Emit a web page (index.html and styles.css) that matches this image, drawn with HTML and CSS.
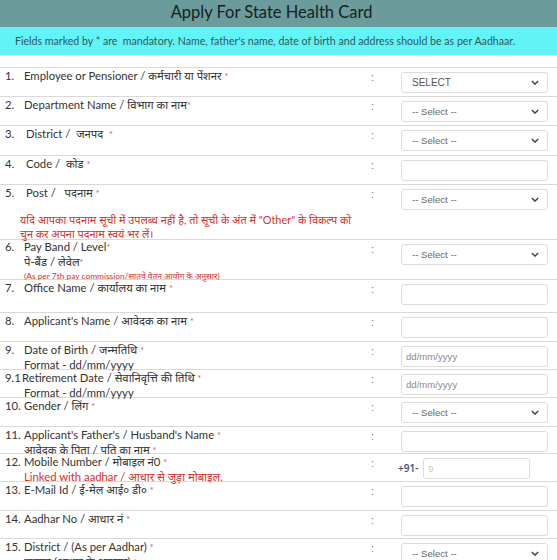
FILE: index.html
```html
<!DOCTYPE html>
<html lang="hi">
<head>
<meta charset="utf-8">
<title>Apply For State Health Card</title>
<link rel="stylesheet" href="styles.css">
</head>
<body>
<div class="title-bar">Apply For State Health Card</div>
<div class="note-bar">Fields marked by * are&nbsp; mandatory. Name, father's name, date of birth and address should be as per Aadhaar.</div>

<div class="form">
  <div class="row r29">
    <div class="label"><span class="num">1.</span><span class="txt">Employee or Pensioner / कर्मचारी या पेंशनर <i class="req">*</i></span></div>
    <div class="colon">:</div>
    <div class="field"><div class="sel"><span class="upper">SELECT</span><svg viewBox="0 0 10 6" class="chev"><path d="M1 1l4 4 4-4" /></svg></div></div>
  </div>
  <div class="row r29">
    <div class="label"><span class="num">2.</span><span class="txt">Department Name / विभाग का नाम<i class="req">*</i></span></div>
    <div class="colon">:</div>
    <div class="field"><div class="sel"><span>-- Select --</span><svg viewBox="0 0 10 6" class="chev"><path d="M1 1l4 4 4-4" /></svg></div></div>
  </div>
  <div class="row r30">
    <div class="label"><span class="num">3.</span><span class="txt sp">District / &nbsp;जनपद &nbsp;<i class="req">*</i></span></div>
    <div class="colon">:</div>
    <div class="field"><div class="sel"><span>-- Select --</span><svg viewBox="0 0 10 6" class="chev"><path d="M1 1l4 4 4-4" /></svg></div></div>
  </div>
  <div class="row r29">
    <div class="label"><span class="num">4.</span><span class="txt sp">Code / &nbsp;कोड <i class="req">*</i></span></div>
    <div class="colon">:</div>
    <div class="field"><div class="inp"></div></div>
  </div>
  <div class="row r55">
    <div class="label">
      <div class="line"><span class="num">5.</span><span class="txt sp">Post / &nbsp;&nbsp;पदनाम <i class="req">*</i></span></div>
      <div class="warn">यदि आपका पदनाम सूची में उपलब्ध नहीं है, तो सूची के अंत में "Other" के विकल्प को<br>चुन कर अपना पदनाम स्वयं भर लें।</div>
    </div>
    <div class="colon">:</div>
    <div class="field"><div class="sel"><span>-- Select --</span><svg viewBox="0 0 10 6" class="chev"><path d="M1 1l4 4 4-4" /></svg></div></div>
  </div>
  <div class="row r40">
    <div class="label tight">
      <div class="line"><span class="num">6.</span><span class="txt">Pay Band / Level<i class="req">*</i></span></div>
      <div class="sub">पे-बैंड / लेवेल<i class="req">*</i></div>
      <div class="sub tiny">(As per 7th pay commission/सातवें वेतन आयोग के अनुसार)</div>
    </div>
    <div class="colon">:</div>
    <div class="field"><div class="sel"><span>-- Select --</span><svg viewBox="0 0 10 6" class="chev"><path d="M1 1l4 4 4-4" /></svg></div></div>
  </div>
  <div class="row r33">
    <div class="label"><span class="num">7.</span><span class="txt">Office Name / कार्यालय का नाम <i class="req">*</i></span></div>
    <div class="colon">:</div>
    <div class="field"><div class="inp"></div></div>
  </div>
  <div class="row r29">
    <div class="label"><span class="num">8.</span><span class="txt">Applicant's Name / आवेदक का नाम <i class="req">*</i></span></div>
    <div class="colon">:</div>
    <div class="field"><div class="inp"></div></div>
  </div>
  <div class="row r28">
    <div class="label">
      <div class="line"><span class="num">9.</span><span class="txt">Date of Birth / जन्मतिथि <i class="req">*</i></span></div>
      <div class="sub">Format - dd/mm/yyyy</div>
    </div>
    <div class="colon">:</div>
    <div class="field"><div class="inp ph">dd/mm/yyyy</div></div>
  </div>
  <div class="row r28">
    <div class="label">
      <div class="line"><span class="num n91">9.1</span><span class="txt">Retirement Date / सेवानिवृत्ति की तिथि <i class="req">*</i></span></div>
      <div class="sub">Format - dd/mm/yyyy</div>
    </div>
    <div class="colon">:</div>
    <div class="field"><div class="inp ph">dd/mm/yyyy</div></div>
  </div>
  <div class="row r29">
    <div class="label"><span class="num">10.</span><span class="txt">Gender / लिंग <i class="req">*</i></span></div>
    <div class="colon">:</div>
    <div class="field"><div class="sel"><span>-- Select --</span><svg viewBox="0 0 10 6" class="chev"><path d="M1 1l4 4 4-4" /></svg></div></div>
  </div>
  <div class="row r27">
    <div class="label">
      <div class="line"><span class="num">11.</span><span class="txt">Applicant's Father's / Husband's Name <i class="req">*</i></span></div>
      <div class="sub">आवेदक के पिता / पति का नाम <i class="req">*</i></div>
    </div>
    <div class="colon">:</div>
    <div class="field"><div class="inp"></div></div>
  </div>
  <div class="row r28">
    <div class="label">
      <div class="line"><span class="num">12.</span><span class="txt">Mobile Number / मोबाइल नं0 <i class="req">*</i></span></div>
      <div class="sub red">Linked with aadhar / आधार से जुड़ा मोबाइल.</div>
    </div>
    <div class="colon">:</div>
    <div class="field mobile"><span class="cc">+91-</span><div class="inp short ph">9</div></div>
  </div>
  <div class="row r29">
    <div class="label"><span class="num">13.</span><span class="txt">E-Mail Id / ई-मेल आई० डी० <i class="req">*</i></span></div>
    <div class="colon">:</div>
    <div class="field"><div class="inp"></div></div>
  </div>
  <div class="row r28">
    <div class="label"><span class="num">14.</span><span class="txt">Aadhar No / आधार नं <i class="req">*</i></span></div>
    <div class="colon">:</div>
    <div class="field"><div class="inp"></div></div>
  </div>
  <div class="row r40">
    <div class="label">
      <div class="line"><span class="num">15.</span><span class="txt">District / (As per Aadhar) <i class="req">*</i></span></div>
      <div class="sub">जनपद (आधार के अनुसार) <i class="req">*</i></div>
    </div>
    <div class="colon">:</div>
    <div class="field"><div class="sel"><span>-- Select --</span><svg viewBox="0 0 10 6" class="chev"><path d="M1 1l4 4 4-4" /></svg></div></div>
  </div>
</div>
</body>
</html>
```

FILE: styles.css
```css
html, body {
  margin: 0;
  padding: 0;
  background: #ffffff;
}
body {
  font-family: Lato, "Noto Sans Devanagari", "Noto Sans", sans-serif;
  color: #333333;
  overflow: hidden;
}
.title-bar {
  height: 27px;
  line-height: 25px;
  background: #6b9b9a;
  color: #151f1f;
  font-size: 16.5px;
  text-align: center;
  padding-right: 14px;
}
.note-bar {
  height: 28px;
  line-height: 29px;
  background: #62f3f6;
  color: #2f5a5a;
  font-size: 10.6px;
  padding-left: 15px;
  white-space: nowrap;
}
.form {
  margin-top: 12px;
}
.row {
  display: grid;
  grid-template-columns: 366px 34px 148px;
  border-top: 1px solid #d9d9d9;
  box-sizing: border-box;
}
.r27 { height: 27px; }
.r28 { height: 28px; }
.r29 { height: 29px; }
.r30 { height: 30px; }
.r33 { height: 33px; }
.r40 { height: 40px; }
.r55 { height: 55px; }
.label {
  font-size: 11.3px;
  line-height: 14px;
  padding: 1px 0 0 5px;
  display: flex;
  flex-direction: column;
}
.row > .label:not(:has(.line)) {
  flex-direction: row;
}
.label.tight {
  padding-top: 0;
  line-height: 13.5px;
}
.line {
  display: flex;
}
.num {
  display: inline-block;
  width: 19px;
  flex: none;
}
.num.n91 {
  width: 17px;
}
.txt.sp {
  padding-left: 2px;
}
.sub {
  padding-left: 19px;
}
.sub.tiny {
  font-size: 8.4px;
  line-height: 14px;
  color: #d4322c;
}
.sub.red {
  color: #d4322c;
}
.req {
  font-style: normal;
  color: #e0505f;
  font-size: 9px;
}
.warn {
  color: #d4322c;
  font-size: 10.9px;
  line-height: 14px;
  padding: 12px 0 0 15px;
  white-space: nowrap;
}
.colon {
  color: #777777;
  font-size: 11px;
  line-height: 14px;
  padding: 2px 0 0 5px;
  font-family: "Liberation Sans", sans-serif;
}
.field {
  padding-top: 4px;
}
.sel, .inp {
  box-sizing: border-box;
  width: 147px;
  height: 21px;
  margin-left: 1px;
  border: 1px solid #dcdcdc;
  border-radius: 3px;
  background: #ffffff;
  font-family: "Liberation Sans", Arial, sans-serif;
  font-size: 9.6px;
  color: #666666;
  display: flex;
  align-items: center;
  padding: 0 8px 0 10px;
}
.sel {
  justify-content: space-between;
}
.sel .upper {
  color: #555555;
  font-size: 10px;
}
.chev {
  width: 8px;
  height: 5px;
  fill: none;
  stroke: #444444;
  stroke-width: 1.8;
}
.inp.ph {
  color: #8a8a8a;
  padding-left: 4px;
}
.field.mobile {
  display: flex;
  align-items: flex-start;
}
.cc {
  font-family: "Open Sans", sans-serif;
  font-size: 10px;
  font-weight: 600;
  color: #3c4c78;
  line-height: 21px;
  margin-left: -2px;
  width: 24px;
}
.inp.short {
  width: 107px;
  color: #c8c8c8;
}
```
